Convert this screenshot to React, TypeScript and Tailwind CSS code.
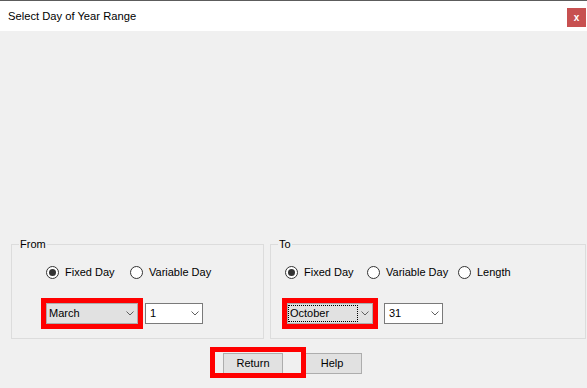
import React from "react";

const Chevron = () => (
  <svg width="8" height="5" viewBox="0 0 8 5" aria-hidden="true">
    <polyline points="0.5,0.5 4,4 7.5,0.5" fill="none" stroke="#606060" strokeWidth="1" />
  </svg>
);

const Radio = ({ label, checked, width }: { label: string; checked?: boolean; width: string }) => (
  <div className={`flex items-center gap-[6px] h-[13px] ${width}`}>
    <span className="w-[13px] h-[13px] rounded-full border border-[#333333] bg-white flex items-center justify-center shrink-0">
      {checked && <span className="w-[7px] h-[7px] rounded-full bg-[#333333]" />}
    </span>
    <span className="whitespace-nowrap leading-[13px]">{label}</span>
  </div>
);

const GrayCombo = ({ text, width, focused }: { text: string; width: string; focused?: boolean }) => (
  <div className={`h-[21px] ${width} bg-[#e1e1e1] border border-[#adadad] flex items-center`}>
    <span
      className={`flex-1 h-[17px] flex items-center pl-[1px] border ${
        focused ? "border-dotted border-black" : "border-transparent"
      }`}
    >
      {text}
    </span>
    <span className="w-[14px] flex justify-center">
      <Chevron />
    </span>
  </div>
);

const WhiteCombo = ({ text, width }: { text: string; width: string }) => (
  <div className={`h-[21px] ${width} bg-white border border-[#7a7a7a] flex items-center justify-between pl-[4px] pr-[3px]`}>
    <span>{text}</span>
    <Chevron />
  </div>
);

const GroupBox = ({ title, width, children }: { title: string; width: string; children: React.ReactNode }) => (
  <div className={`h-[95px] ${width} border border-[#dcdcdc] flex flex-col`}>
    <span className="-mt-[7px] ml-[7px] px-[1px] h-[13px] leading-[13px] w-fit bg-[#f0f0f0]">{title}</span>
    {children}
  </div>
);

export default function App() {
  return (
    <div
      className="w-[587px] h-[388px] bg-[#f0f0f0] flex flex-col text-[11px] text-black overflow-hidden"
      style={{ fontFamily: '"Liberation Sans", Arial, sans-serif' }}
    >
      <div className="h-[31px] bg-white border-t border-[#5c5c5c] flex justify-between shrink-0">
        <span className="pl-[8px] self-center text-[11.2px] leading-[14px]">Select Day of Year Range</span>
        <span className="mt-[7px] mr-[1px] w-[19px] h-[19px] bg-[#c75050] text-white font-bold text-[10px] leading-none flex items-center justify-center">
          x
        </span>
      </div>

      <div className="flex-1 flex flex-col justify-end pb-[14px]">
        <div className="flex gap-[6px] pl-[11px]">
          <GroupBox title="From" width="w-[253px]">
            <div className="flex mt-[15px] pl-[34px]">
              <Radio label="Fixed Day" checked width="w-[84px]" />
              <Radio label="Variable Day" width="w-[90px]" />
            </div>
            <div className="flex items-center mt-[19px] pl-[29px] gap-[2px]">
              <div className="border-[5px] border-[#ff0000]">
                <GrayCombo text="March" width="w-[92px]" />
              </div>
              <WhiteCombo text="1" width="w-[58px]" />
            </div>
          </GroupBox>
          <GroupBox title="To" width="w-[316px]">
            <div className="flex mt-[15px] pl-[14px]">
              <Radio label="Fixed Day" checked width="w-[82px]" />
              <Radio label="Variable Day" width="w-[91px]" />
              <Radio label="Length" width="w-[60px]" />
            </div>
            <div className="flex items-center mt-[19px] pl-[11px] gap-[6px]">
              <div className="border-[5px] border-[#ff0000]">
                <GrayCombo text="October" width="w-[86px]" focused />
              </div>
              <WhiteCombo text="31" width="w-[59px]" />
            </div>
          </GroupBox>
        </div>

        <div className="relative flex mt-[14px] pl-[223px] gap-[19px]">
          <button className="w-[60px] h-[21px] bg-[#e1e1e1] border border-[#adadad] text-[11px] leading-none">
            Return
          </button>
          <button className="w-[60px] h-[21px] bg-[#e1e1e1] border border-[#adadad] text-[11px] leading-none">
            Help
          </button>
          <div className="absolute left-[210px] -top-[6px] w-[96px] h-[31px] border-[5px] border-[#ff0000] pointer-events-none" />
        </div>
      </div>
    </div>
  );
}
